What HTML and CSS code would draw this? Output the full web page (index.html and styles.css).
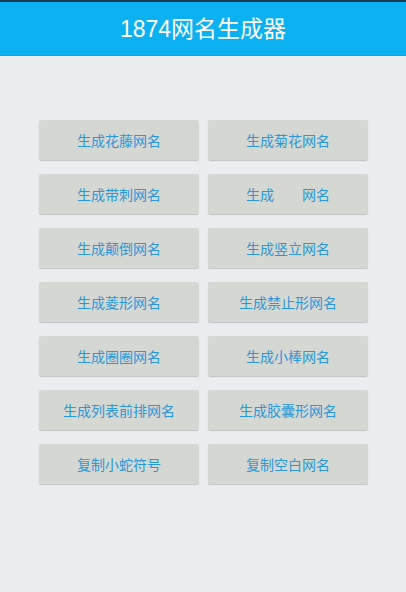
FILE: index.html
```html
<!DOCTYPE html>
<html lang="zh-CN">
<head>
<meta charset="utf-8">
<title>1874网名生成器</title>
<link rel="stylesheet" href="styles.css">
</head>
<body>
<div class="topline"></div>
<header class="header">1874网名生成器</header>
<main class="grid">
  <div class="btn">生成花藤网名</div>
  <div class="btn">生成菊花网名</div>
  <div class="btn">生成带刺网名</div>
  <div class="btn">生成<span class="gap"></span>网名</div>
  <div class="btn">生成颠倒网名</div>
  <div class="btn">生成竖立网名</div>
  <div class="btn">生成菱形网名</div>
  <div class="btn">生成禁止形网名</div>
  <div class="btn">生成圈圈网名</div>
  <div class="btn">生成小棒网名</div>
  <div class="btn">生成列表前排网名</div>
  <div class="btn">生成胶囊形网名</div>
  <div class="btn">复制小蛇符号</div>
  <div class="btn">复制空白网名</div>
</main>
</body>
</html>
```
FILE: styles.css
```css
html, body {
  margin: 0;
  padding: 0;
  background: #e9edf0;
  font-family: "Liberation Sans", "Noto Sans CJK SC", sans-serif;
  height: 592px;
  overflow: hidden;
}
.topline {
  height: 2px;
  background: #1d3b52;
}
.header {
  height: 54px;
  background: #0cb1f1;
  color: #ffffff;
  font-size: 23px;
  line-height: 54px;
  text-align: center;
  border-bottom: 1px solid #1aa2d6;
  box-sizing: border-box;
}
.grid {
  display: grid;
  grid-template-columns: 160px 160px;
  column-gap: 9px;
  row-gap: 14px;
  padding: 64px 0 0 39px;
}
.btn {
  height: 40px;
  background: #d5d7d2;
  border-radius: 2px;
  box-shadow: 0 1px 1px rgba(0,0,0,0.18);
  color: #2a98d8;
  font-size: 14px;
  display: flex;
  align-items: center;
  justify-content: center;
}
.gap {
  display: inline-block;
  width: 28px;
}
```
